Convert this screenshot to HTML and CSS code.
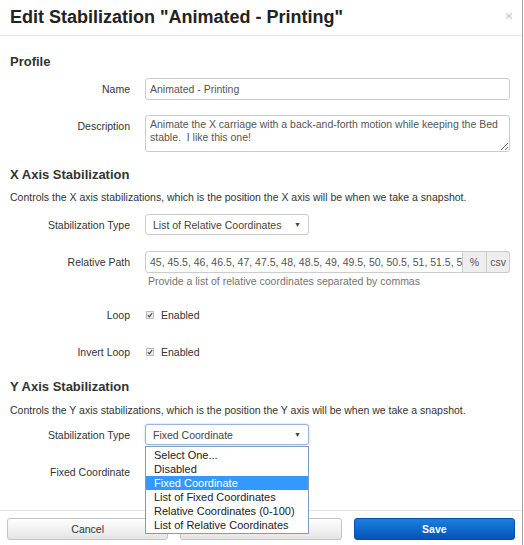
FILE: index.html
```html
<!DOCTYPE html>
<html>
<head>
<meta charset="utf-8">
<link rel="stylesheet" href="styles.css">
</head>
<body>
<div class="modal">
  <div class="modal-header">
    <h3 class="title">Edit Stabilization "Animated - Printing"</h3>
    <span class="close">×</span>
  </div>
  <div class="modal-body">
    <h4 class="section first">Profile</h4>
    <div class="row r-name">
      <label class="lbl">Name</label>
      <div class="ctl"><div class="input">Animated - Printing</div></div>
    </div>
    <div class="row r-desc top">
      <label class="lbl lbl-top">Description</label>
      <div class="ctl"><textarea class="textarea" readonly>Animate the X carriage with a back-and-forth motion while keeping the Bed stable.  I like this one!</textarea></div>
    </div>

    <h4 class="section">X Axis Stabilization</h4>
    <p class="desc">Controls the X axis stabilizations, which is the position the X axis will be when we take a snapshot.</p>
    <div class="row r-stype">
      <label class="lbl">Stabilization Type</label>
      <div class="ctl"><div class="select"><span>List of Relative Coordinates</span><span class="caret">▼</span></div></div>
    </div>
    <div class="row r-path top">
      <label class="lbl lbl-path">Relative Path</label>
      <div class="ctl">
        <div class="input-group">
          <div class="input grow">45, 45.5, 46, 46.5, 47, 47.5, 48, 48.5, 49, 49.5, 50, 50.5, 51, 51.5, 52, 52.5</div>
          <span class="addon pct">%</span>
          <span class="addon csv">csv</span>
        </div>
        <div class="help">Provide a list of relative coordinates separated by commas</div>
      </div>
    </div>
    <div class="row r-loop">
      <label class="lbl">Loop</label>
      <div class="ctl check"><span class="cb"><svg width="6" height="6" viewBox="0 0 6 6"><path d="M0.8 3.2 L2.4 4.8 L5.2 1" fill="none" stroke="#444" stroke-width="1.2"/></svg></span>Enabled</div>
    </div>
    <div class="row r-invert">
      <label class="lbl">Invert Loop</label>
      <div class="ctl check"><span class="cb"><svg width="6" height="6" viewBox="0 0 6 6"><path d="M0.8 3.2 L2.4 4.8 L5.2 1" fill="none" stroke="#444" stroke-width="1.2"/></svg></span>Enabled</div>
    </div>

    <h4 class="section y">Y Axis Stabilization</h4>
    <p class="desc y">Controls the Y axis stabilizations, which is the position the Y axis will be when we take a snapshot.</p>
    <div class="row r-ystype">
      <label class="lbl">Stabilization Type</label>
      <div class="ctl">
        <div class="select-wrap">
          <div class="select focus"><span>Fixed Coordinate</span><span class="caret">▼</span></div>
          <ul class="dropdown">
            <li>Select One...</li>
            <li>Disabled</li>
            <li class="sel">Fixed Coordinate</li>
            <li>List of Fixed Coordinates</li>
            <li>Relative Coordinates (0-100)</li>
            <li>List of Relative Coordinates</li>
          </ul>
        </div>
      </div>
    </div>
    <div class="row r-fixed">
      <label class="lbl">Fixed Coordinate</label>
      <div class="ctl"><div class="input small"></div></div>
    </div>
  </div>
  <div class="modal-footer">
    <button class="btn">Cancel</button>
    <button class="btn">Restore Defaults</button>
    <button class="btn btn-primary">Save</button>
  </div>
</div>
</body>
</html>
```

FILE: styles.css
```css
* { box-sizing: border-box; }
html, body { margin: 0; padding: 0; background: #fff; }
body {
  font-family: "Liberation Sans", Arial, sans-serif;
  font-size: 10.5px;
  color: #333;
  width: 524px;
  height: 545px;
  overflow: hidden;
}
.modal {
  width: 523px;
  border-right: 1px solid #a0a0a0;
  background: #fff;
  height: 545px;
}
.modal-header {
  height: 36px;
  border-bottom: 1px solid #e5e5e5;
  display: flex;
  align-items: center;
  justify-content: space-between;
  padding: 0 9px 1px 10px;
}
.title {
  margin: 0;
  font-size: 18px;
  font-weight: bold;
  color: #222;
  line-height: 20px;
}
.close {
  color: #c8c8c8;
  font-size: 14px;
  line-height: 14px;
  margin-top: -2px;
}
.modal-body {
  padding: 18px 12px 0 10px;
  height: 474px;
}
.section {
  margin: 15px 0 0 0;
  font-size: 13px;
  line-height: 16px;
  font-weight: bold;
  color: #333;
}
.section.first { margin-top: 0; }
.section.y { margin-top: 17px; }
.desc {
  margin: 7px 0 0 0;
  line-height: 14px;
}
.desc.y { margin-top: 8px; }
.row {
  display: flex;
  align-items: center;
}
.row.top { align-items: flex-start; }
.lbl {
  width: 120px;
  text-align: right;
  flex: none;
  line-height: 14px;
}
.lbl-top { padding-top: 4px; }
.lbl-path { padding-top: 4px; }
.ctl {
  flex: 1;
  margin-left: 15px;
  min-width: 0;
}
.r-name { margin-top: 8px; }
.r-desc { margin-top: 15px; }
.r-stype { margin-top: 10px; }
.r-path { margin-top: 16px; }
.r-loop { margin-top: 17px; height: 20px; }
.r-invert { margin-top: 17px; height: 20px; }
.r-ystype { margin-top: 7px; }
.r-fixed { margin-top: 16px; height: 22px; }

.input {
  height: 22px;
  border: 1px solid #ccc;
  border-radius: 3px;
  padding: 0 4px;
  line-height: 20px;
  color: #555;
  white-space: nowrap;
  overflow: hidden;
  background: #fff;
}
.input.small { width: 164px; }
.textarea {
  display: block;
  width: 100%;
  height: 37px;
  border: 1px solid #ccc;
  border-radius: 3px;
  padding: 2px 4px;
  font-family: "Liberation Sans", Arial, sans-serif;
  font-size: 10.5px;
  line-height: 13px;
  color: #555;
  resize: both;
  overflow: hidden;
  margin: 0;
  outline: none;
}
.select {
  width: 164px;
  height: 21px;
  border: 1px solid #ccc;
  border-radius: 3px;
  display: flex;
  align-items: center;
  justify-content: space-between;
  padding: 0 7px 0 7px;
  color: #444;
  background: #fff;
}
.select .caret {
  font-size: 7px;
  color: #444;
}
.select.focus {
  border-color: #9ab6de;
  box-shadow: 0 0 2px rgba(102, 150, 220, 0.6);
  height: 21px;
}
.select-wrap {
  position: relative;
  width: 164px;
}
.dropdown {
  position: absolute;
  top: 22px;
  left: 0;
  width: 164px;
  margin: 0;
  padding: 1px 0;
  list-style: none;
  background: #fff;
  border: 1px solid #7f9db9;
  z-index: 10;
}
.dropdown li {
  height: 14px;
  line-height: 14px;
  font-size: 11px;
  padding-left: 8px;
  color: #222;
  white-space: nowrap;
}
.dropdown li.sel {
  background: #3399ff;
  color: #fff;
}
.input-group {
  display: flex;
  height: 22px;
}
.input-group .grow {
  flex: 1;
  min-width: 0;
  border-radius: 3px 0 0 3px;
  padding-left: 4px;
}
.addon {
  flex: none;
  height: 22px;
  border: 1px solid #ccc;
  border-left: none;
  background: #eee;
  color: #555;
  line-height: 20px;
  text-align: center;
}
.addon.pct { width: 24px; }
.addon.csv { width: 23px; border-radius: 0 3px 3px 0; }
.help {
  margin-top: 2px;
  line-height: 13px;
  color: #737373;
  padding-left: 3px;
}
.check {
  display: flex;
  align-items: center;
  line-height: 14px;
}
.cb {
  width: 8px;
  height: 8px;
  border: 1px solid #bdbdbd;
  background: #efefef;
  display: inline-flex;
  align-items: center;
  justify-content: center;
  margin-right: 7px;
  margin-left: 1px;
}
.cb svg { display: block; }

.modal-footer {
  border-top: 1px solid #e5e5e5;
  padding: 7px 7px 0 7px;
  display: grid;
  grid-template-columns: 1fr 1fr 1fr;
  column-gap: 12px;
}
.btn {
  height: 22px;
  border: 1px solid #c4c4c4;
  border-radius: 3px;
  background: linear-gradient(to bottom, #ffffff, #e4e4e4);
  font-family: "Liberation Sans", Arial, sans-serif;
  font-size: 10.5px;
  color: #333;
  padding: 0;
}
.btn-primary {
  background: linear-gradient(to bottom, #1a7fe0, #0452b8);
  border-color: #0550b0;
  color: #fff;
  font-weight: bold;
}
```
